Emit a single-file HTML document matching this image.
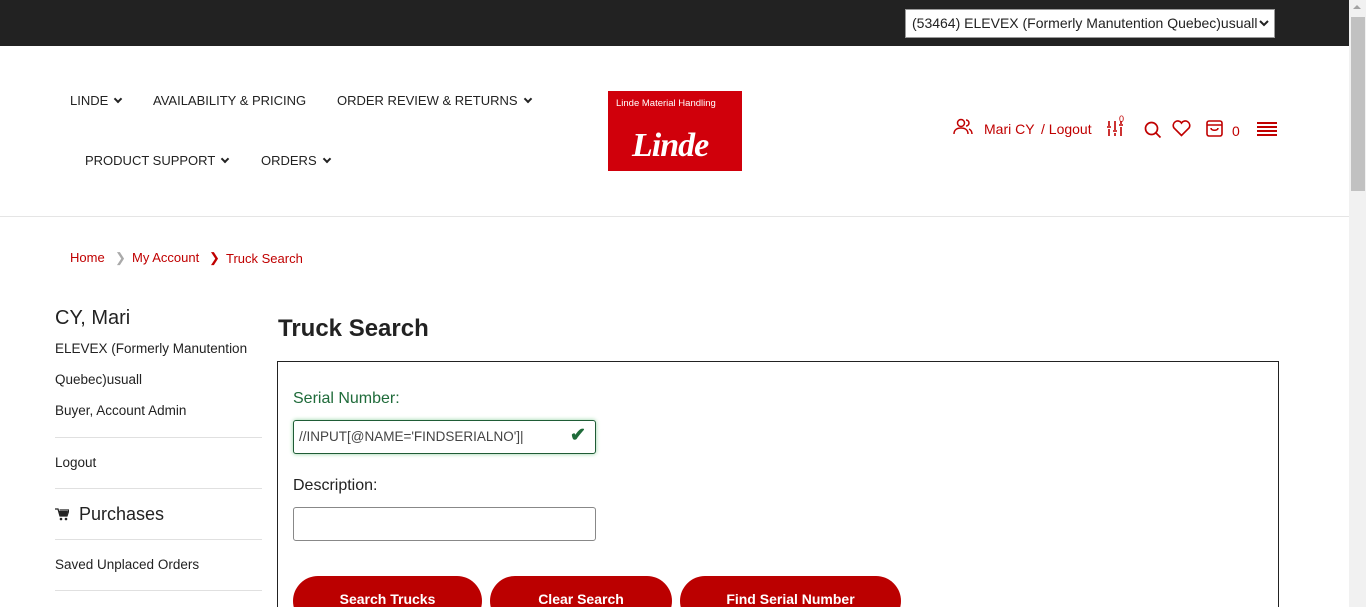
<!DOCTYPE html>
<html><head><meta charset="utf-8"><style>
*{box-sizing:border-box;margin:0;padding:0}
html,body{width:1366px;height:607px;overflow:hidden}
body{font-family:"Liberation Sans",Arial,sans-serif;background:#fff;position:relative;color:#222}
.abs{position:absolute}
.top{left:0;top:0;width:1349px;height:46px;background:#222}
.sel{left:905px;top:9px;width:370px;height:29px;background:#fff;border:1px solid #999;font-size:14px;color:#222;padding:5px 6px;white-space:nowrap;overflow:hidden}
.sb{left:1349px;top:0;width:17px;height:607px;background:#f1f1f1}
.thumb{left:1351px;top:17px;width:14px;height:174px;background:#c1c1c1}
.nav{font-size:13px;color:#222;white-space:nowrap}
.car{display:inline-block;width:6px;height:6px;border-right:2px solid #222;border-bottom:2px solid #222;transform:rotate(45deg);margin-left:7px;position:relative;top:-3px}
.red{color:#c00000}
.hr{left:0;top:216px;width:1349px;height:1px;background:#e5e5e5}
.bc{font-size:13px;top:250px}
.side{font-size:13.5px;color:#222;white-space:nowrap}
.line{left:55px;width:207px;height:1px;background:#e0e0e0}
.box{left:277px;top:361px;width:1002px;height:260px;border:1px solid #222}
.lbl{font-size:16px}
.inp{border:1px solid #888;border-radius:3px;background:#fff}
.btn{top:576px;height:50px;border-radius:26px;background:#bb0000;color:#fff;font-size:14px;font-weight:bold;text-align:center;padding-top:15px}
</style></head><body>
<div class="abs top"></div>
<div class="abs sel">(53464) ELEVEX (Formerly Manutention Quebec)usuall</div>
<svg class="abs" style="left:1259px;top:19px" width="10" height="8" viewBox="0 0 10 8"><path d="M1 2l4 4 4-4" stroke="#222" stroke-width="2" fill="none"/></svg>
<div class="abs sb"></div><div class="abs thumb"></div>
<div class="abs" style="left:1353px;top:5px;width:0;height:0;border-left:4px solid transparent;border-right:4px solid transparent;border-bottom:4px solid #a3a3a3"></div>

<div class="abs nav" style="left:70px;top:93px">LINDE<span class="car"></span></div>
<div class="abs nav" style="left:153px;top:93px">AVAILABILITY &amp; PRICING</div>
<div class="abs nav" style="left:337px;top:93px">ORDER REVIEW &amp; RETURNS<span class="car"></span></div>
<div class="abs nav" style="left:85px;top:153px">PRODUCT SUPPORT<span class="car"></span></div>
<div class="abs nav" style="left:261px;top:153px">ORDERS<span class="car"></span></div>

<div class="abs" style="left:608px;top:91px;width:134px;height:80px;background:#d0000b;color:#fff">
<div style="font-size:9.5px;position:absolute;left:8px;top:7px;white-space:nowrap">Linde Material Handling</div>
<div style="font-family:'Liberation Serif',serif;font-style:italic;font-weight:bold;font-size:34px;position:absolute;left:24px;top:36px;letter-spacing:-1px">Linde</div>
</div>

<svg class="abs" style="left:953px;top:118px" width="20" height="18" viewBox="0 0 20 18" fill="none" stroke="#c00000" stroke-width="1.5"><circle cx="8" cy="5" r="3.5"/><path d="M1 16c0-4 3-6 7-6s7 2 7 6M13 2a3 3 0 0 1 0 6M16 11c2 1 3 3 3 5"/></svg>
<div class="abs red" style="left:984px;top:121px;font-size:14px">Mari CY</div>
<div class="abs red" style="left:1041px;top:121px;font-size:14px">/ Logout</div>
<svg class="abs" style="left:1106px;top:119px" width="18" height="18" viewBox="0 0 18 18" stroke="#c00000" stroke-width="1.6" fill="none"><path d="M3 2v5M3 10v7M9 2v9M9 14v3M15 2v3M15 8v9M1 8h4M7 12h4M13 6h4"/></svg>
<div class="abs red" style="left:1119px;top:114px;font-size:9px">0</div>
<svg class="abs" style="left:1144px;top:121px" width="18" height="18" viewBox="0 0 18 18" fill="none" stroke="#c00000" stroke-width="1.7"><circle cx="7.5" cy="7.5" r="6"/><path d="M12 12l4.5 4.5"/></svg>
<svg class="abs" style="left:1172px;top:120px" width="19" height="17" viewBox="0 0 19 17" fill="none" stroke="#c00000" stroke-width="1.6"><path d="M9.5 15.5L2 8A4.3 4.3 0 0 1 9.5 3 4.3 4.3 0 0 1 17 8z"/></svg>
<svg class="abs" style="left:1206px;top:119px" width="17" height="18" viewBox="0 0 17 18" fill="none" stroke="#c00000" stroke-width="1.6"><rect x="1" y="2" width="15" height="15" rx="2"/><path d="M1 6h15M5 9c0 3 7 3 7 0"/></svg>
<div class="abs red" style="left:1232px;top:123px;font-size:14px">0</div>
<div class="abs" style="left:1257px;top:122px;width:20px;height:2px;background:#c00000;box-shadow:0 4px 0 #c00000,0 8px 0 #c00000,0 12px 0 #c00000"></div>

<div class="abs hr"></div>
<div class="abs bc red" style="left:70px">Home</div>
<div class="abs bc" style="left:115px;color:#aaa">&#x276F;</div>
<div class="abs bc red" style="left:132px">My Account</div>
<div class="abs bc red" style="left:209px">&#x276F;</div>
<div class="abs bc red" style="left:226px;top:251px">Truck Search</div>

<div class="abs" style="left:55px;top:307px;font-size:20px;color:#222">CY, Mari</div>
<div class="abs side" style="left:55px;top:341px">ELEVEX (Formerly Manutention</div>
<div class="abs side" style="left:55px;top:372px">Quebec)usuall</div>
<div class="abs side" style="left:55px;top:403px">Buyer, Account Admin</div>
<div class="abs line" style="top:437px"></div>
<div class="abs side" style="left:55px;top:455px">Logout</div>
<div class="abs line" style="top:488px"></div>
<svg class="abs" style="left:55px;top:508px" width="14" height="13" viewBox="0 0 14 13" fill="#222"><path d="M0 1h3l2 7h7l2-6H4.5" stroke="#222" stroke-width="1.3" fill="none"/><path d="M4 3h9l-1.5 5H5.5z"/><circle cx="6" cy="11" r="1.3"/><circle cx="11" cy="11" r="1.3"/></svg>
<div class="abs" style="left:79px;top:504px;font-size:18px">Purchases</div>
<div class="abs line" style="top:539px"></div>
<div class="abs side" style="left:55px;top:557px">Saved Unplaced Orders</div>
<div class="abs line" style="top:590px"></div>

<div class="abs" style="left:278px;top:315px;font-size:24px;font-weight:bold">Truck Search</div>
<div class="abs box"></div>
<div class="abs lbl" style="left:293px;top:390px;color:#1f6b3a">Serial Number:</div>
<div class="abs inp" style="left:293px;top:420px;width:303px;height:34px;border-color:#1f5c36;box-shadow:0 0 4px #8fd19e"></div>
<div class="abs" style="left:299px;top:429px;font-size:13.5px;color:#444">//INPUT[@NAME='FINDSERIALNO']|</div>
<div class="abs" style="left:570px;top:424px;font-size:19px;color:#1f6b3a;font-weight:bold">&#10004;</div>
<div class="abs lbl" style="left:293px;top:477px">Description:</div>
<div class="abs inp" style="left:293px;top:507px;width:303px;height:34px"></div>
<div class="abs btn" style="left:293px;width:189px">Search Trucks</div>
<div class="abs btn" style="left:490px;width:182px">Clear Search</div>
<div class="abs btn" style="left:680px;width:221px">Find Serial Number</div>
</body></html>
